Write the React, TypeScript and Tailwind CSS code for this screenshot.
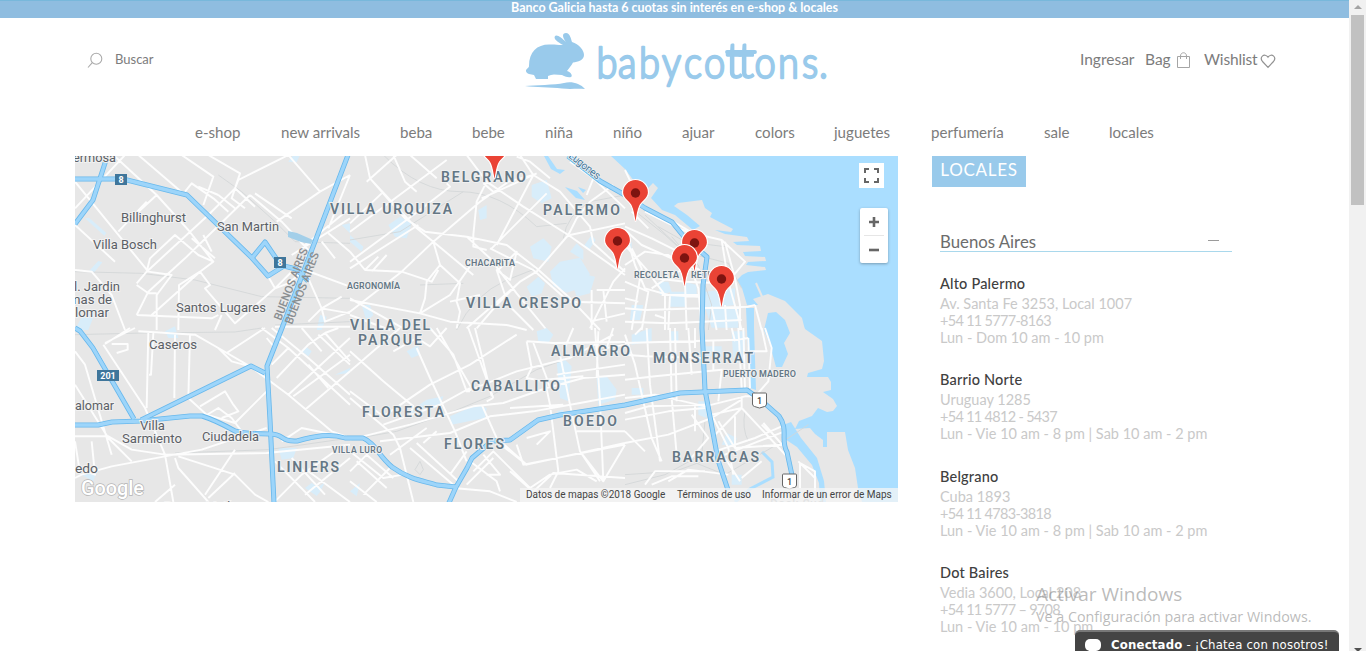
import React from "react";

const NAV: [string, string][] = [
  ["e-shop", "w-[46px]"],
  ["new arrivals", "w-[79px]"],
  ["beba", "w-[32px]"],
  ["bebe", "w-[33px]"],
  ["niña", "w-[28px]"],
  ["niño", "w-[29px]"],
  ["ajuar", "w-[33px]"],
  ["colors", "w-[39px]"],
  ["juguetes", "w-[57px]"],
  ["perfumería", "w-[73px]"],
  ["sale", "w-[25px]"],
  ["locales", "w-[45px]"],
];

const STORES = [
  { name: "Alto Palermo", address: "Av. Santa Fe 3253, Local 1007", phone: "+54 11 5777-8163", hours: "Lun - Dom 10 am - 10 pm" },
  { name: "Barrio Norte", address: "Uruguay 1285", phone: "+54 11 4812 - 5437", hours: "Lun - Vie 10 am - 8 pm | Sab 10 am - 2 pm" },
  { name: "Belgrano", address: "Cuba 1893", phone: "+54 11 4783-3818", hours: "Lun - Vie 10 am - 8 pm | Sab 10 am - 2 pm" },
  { name: "Dot Baires", address: "Vedia 3600, Local 208", phone: "+54 11 5777 – 9708", hours: "Lun - Vie 10 am - 10 pm" },
];

/* Each tile holds its streets in a local grid three times finer than the map. */
const TILES = [
  {
    x: 75, y: 155,
    parks: "M30 190l12 -2l52 46l-6 8zM40 350l30-32l12 4l-24 30zM0 525l20-40l40-10l-20 50zM800 210l25 -5v30zM640 20l15-20h20l-10 22zM735 480l20 5l-15 40h-15z",
    rail: "M0 350L200 355L360 375L560 425L825 430M430 60L500 110L600 200L660 260L825 265M600 510L825 500",
    streets: "M115 0L245 120L340 225L415 320M190 0L330 120M320 0L415 65L385 150M400 0L495 55L480 100L540 155M500 0L640 0L490 75L480 100L400 180L215 350L185 385M640 0L735 110L605 200M735 110L825 60M525 120L620 200L700 285M540 115L650 190M525 120L330 310L220 410L185 480M150 0L0 160M330 110L350 85L415 130L460 170M370 95L430 120M430 120L480 160M480 100L470 130L510 160M0 80L220 350L290 360L245 420V525M215 350L225 310L300 240L370 300L415 320L375 350L230 480M310 525L312 390L375 350L405 390L390 400L480 505L600 400L700 300M185 390L220 415H245M0 210L120 320M350 250L420 310M385 240L410 290M0 345L50 350L110 420L150 525M185 480L410 490L430 480M580 365L600 400L640 385L690 345L825 395M700 370L740 460L825 475M740 460L700 500M690 270L825 160M825 60L760 220M740 260L780 310M760 235L825 290M650 300L825 190M420 525L440 480M600 515L825 515M800 425L740 460L750 500L825 470M130 230L215 140M245 120L180 180",
  },
  {
    x: 350, y: 155,
    parks: "M115 210l35-25l35 20l-15 45l-35-5zM385 165l25-15v40l-20 5zM540 275l40-25l25 25l-10 45l-45-10zM600 350l30-30l60-12l30 50l-25 40l-45 15l-40-20zM660 290l20-25l20 20v30zM690 355l45 10l-15 50l-40 10l-10-30zM530 395l35-30l20 20l-10 30l-30 10zM545 90l45-15l15 55l-30 15l-30-20zM0 240l40 35l-5 15l-35-30zM700 275l25-35l12 15l-20 30zM35 450l25 0l10 30l-20 20z",
    rail: "M100 0Q210 110 330 110T560 215L650 205M320 525Q370 420 470 375L560 340M0 255L150 230L340 110M210 390L340 385M640 250Q650 180 720 140L825 120",
    streets: "M45 0L60 70L195 215L250 260L370 360M50 80L140 0M0 230L290 15M0 320L190 180L300 95L290 85M0 340L205 210M0 205L95 115M130 0L165 80L200 110M180 0L260 70M60 70L165 190L225 230L350 245L470 270L560 340L660 430L750 525M350 0L410 80L380 140L370 240V275L410 285M250 260L390 140L475 80L550 60L630 110L720 215L730 265M410 80L520 155L655 240L825 360M395 130L560 55M400 85L430 110M510 0L550 60L440 270M500 5L540 20L600 70M590 115L425 280M655 240L560 350L510 380L440 450L380 520M655 240L680 190L720 140L790 90M250 260L270 330L230 380L225 430L210 475L0 435M270 330L330 385L320 440L330 470L320 520M250 260L155 350L0 470M155 350L245 380L265 345M65 350L110 300M45 345L85 305M370 320L300 420L210 475M350 245L420 310L500 415L590 525M420 280L550 345L640 425L660 440L825 445M440 350L500 290L480 375L440 345L475 450L550 525M500 290L450 340M510 380L430 450L350 520M660 240L825 205M0 430L160 520M0 480L120 525M210 475L300 500L470 510L530 525M300 440L390 420M740 405H825M725 405V525M760 405L770 500M720 500L825 475M720 520L790 380L825 340M0 290L45 345L155 350M730 265L825 350M730 70L825 160M660 20L730 70L710 120",
  },
  {
    x: 625, y: 155,
    parks: "M100 380h30l10 30l-35 10zM135 410h45v45h-45zM240 410l90-10v50l-90 10zM180 380l35 10v30h-35zM20 450h35l-10 45h-30zM0 280l20-20v30zM240 458h100v60h-80z",
    rail: "M20 160L120 240L175 290L310 325L350 400M100 215L180 260L300 275M60 180L220 330L260 450L250 525M140 245L215 330",
    streets: "M0 45L50 150L110 180L205 235L290 255L360 320L310 380M0 215L80 250L160 290M60 170L150 215L210 240M0 225L50 270L140 310L225 345M0 330L60 290L130 300L220 360M0 270L70 350L90 380L120 420M0 230L30 330L60 400L130 420L220 425M20 280L50 340L35 430L20 525M90 370L180 380L290 385M120 420V525M135 420L130 525M80 400L140 360L180 340M180 385L185 525M290 255L310 380L350 525M300 260L330 370L345 450V525M0 460L60 465L370 455L390 450M0 500L130 505L350 495M0 380L70 410L50 525M200 345L220 400L230 525M260 455L275 525M300 450L305 525M390 450L410 525M20 170L70 220M110 420H220M90 480L120 490M0 430L40 440",
  },
  {
    x: 75, y: 328,
    parks: "M680 70l12-15l18 15l-10 15zM610 360h55l-10 30l-35 5zM270 10l30-15l10 35h-30zM690 480l20-15l20 12l20-15l-15 30l-10 12zM20 440l45-10l-10 30zM780 140l45-20v15z",
    rail: "M0 20L210 15L480 12L560 0M300 375L580 365L825 330",
    streets: "M0 0L60 60L150 220M90 45L180 0M85 50L210 240L270 380L295 522M0 70L30 110L110 380M0 170L100 330L170 400M0 325L100 325L170 365L270 380L575 375L825 350M0 450L20 440L110 415L270 385L380 365L575 300M110 48H158V65L125 75M220 10L215 240M235 15L228 140H222M300 20L298 210M345 20L340 210M190 10L360 20L430 60L525 115L640 200L770 310L825 330M430 60L470 100L525 115M455 75L570 0M340 210L395 260L480 285L575 190M375 235L450 190L475 230L490 250L440 270M380 270L430 240L470 270L500 310M605 150L700 50L750 15L825 100M640 200L825 30M655 205L825 80M690 245L825 130M560 0L640 60L825 230M590 0L700 90L825 200M730 20L825 110M750 15L790 0M700 110L760 180M640 60L590 110M740 70L680 0M0 340L15 435M50 340L60 440L30 430M300 390L310 420L400 522M310 385L480 440L540 500L580 522M400 510L480 435M480 365L390 500M240 522L300 470M600 400L720 522M825 390L690 500M700 430L825 522M600 520L680 440L780 370M650 390L750 500M620 340L680 300L825 330M165 0L90 48M575 30L600 60",
  },
  {
    x: 350, y: 328,
    parks: "M180 250l50-35l50-10l-10 30l-80 25zM300 265l80-35l30 10l-5 30l-100 20zM620 100l20-10l25 25l-10 105l-25-10zM740 150l30-5l30 40l-5 30l-50 15zM170 70l35-20l5 30l-25 10zM560 10l30-10l20 20l-15 25l-30-5zM620 250l20-5v20zM0 490l30-25l-10 40z",
    rail: "M0 335L140 310L310 250L420 205L560 125L660 90L825 45M210 400l10 25l-10 15l-15-15z",
    streets: "M0 130L150 0M0 70L100 160L190 235L180 260M0 190L100 265L240 170L360 110L500 20M0 210L130 320L150 360L190 522M130 70L200 30L240 55L290 0M200 60L240 150L280 235L315 310L350 400M240 0L310 80L350 190L360 190M260 0L370 190M355 0L430 210M375 0L425 205M350 190L500 130L660 90L790 20M100 290L270 230L360 180M0 335L180 290L370 235L460 225L590 180L700 150L825 140M90 340L300 315L420 265L550 250L690 225L825 200M395 230L440 330M410 220L430 210M440 330L530 410L600 395L825 345M0 430L60 370M0 370L100 450L160 440M20 400L110 480M50 380L130 450M120 380L230 300M180 360L310 470M200 345L325 460M220 345L260 310M300 440L350 370M120 420L40 500M310 480L420 490L500 522M360 400L440 460L450 490M370 430L430 370L540 480L600 440L680 425L740 460M350 470L430 390M400 380L450 440L410 440M440 340L530 410M500 350L520 410L825 350M530 40L545 120L530 150L585 160L600 230L625 430L600 480M530 40L610 45L825 42M550 45L590 150L600 180M585 155L700 145M630 80L660 230L690 370L750 460M735 0L750 220L760 460M745 10L740 150M670 0L640 70M620 140L825 110M680 310L825 310M690 370L760 460L825 350M530 330L600 310L560 350M825 450L610 435L540 500M480 240L640 230M480 430L560 500M790 0L770 60L825 50M0 460L80 522",
  },
  {
    x: 625, y: 328,
    parks: "M20 20l60-20v40l-60 10zM320 10h40v100l-35-10zM220 220h25v50l-25-10zM290 350l15-35l30 15l-5 25zM320 440l30 0v30h-30zM135 10h25v30h-25zM240 55h50v30h-50zM20 180h35v20h-35z",
    rail: "M240 280L230 380L120 440L0 470M360 250Q350 300 370 340M200 400L300 440L490 330L550 290M0 440L150 430L260 390",
    streets: "M0 45L340 35L370 30M0 20L30 110L80 330L110 400M65 0L75 170L105 400M135 0L140 210L155 380M150 0L155 220M190 0L200 140M340 0L350 180M355 0L360 180M370 30L375 180M0 155L90 145L290 125L360 130M0 210L90 200L240 235L360 205L400 205M0 255L70 235L240 230M0 275L130 250L240 240M0 345L130 320L260 270L350 215M350 205V240L490 390M260 260L350 240M255 250L310 360L325 440M280 280L330 360L470 350M270 370L390 330L470 295M275 390L400 340L480 310M330 265V360M350 240L260 330M415 285L480 360M410 290L430 310M60 470L90 430L240 430M80 470L140 445H220M210 235V310M130 460L190 425L310 440M290 125L280 220M210 60V0M265 40V130M375 70H425L410 0M420 0L440 60L430 160L395 200M0 80L60 85L250 90M300 390L345 460M350 450L410 400M520 400L570 450M570 490V430L525 405V480M0 310L60 370M30 20L50 0M320 0L330 40M200 260L250 330L190 400",
  },
];

const MAJOR = [
  "M75 179L123 179L187 195L252 258L268 276L284 266L296 269L308 281",
  "M106 160L93 200L75 224",
  "M252 258L265 242L280 264",
  "M348 155L282 328L267 366L270 420L274 503",
  "M75 328L80 331L93 348L134 419",
  "M141 420L251 366L265 373",
  "M75 425L98 425L112 422L141 421L160 419L190 416L202 416Q215 420 235 431Q245 434 270 434C285 434 280 442 297 441C315 436 330 433 345 438L363 438C375 443 378 455 392 467C410 480 425 481 437 485L456 487L467 468L472 458L492 441L510 440L538 420L560 415L625 405L680 393L747 390L762 401L779 416C789 430 780 440 787 452L793 480",
  "M456 487L448 505",
  "M568 156L600 181L625 195L645 208L672 222L685 238L707 257L703 285L702 328L705 390L711 422L718 460L728 490",
];

const PINS: [number, number][] = [
  [494.5, 179], [635.5, 221.5], [617.5, 269.5], [694.5, 271.5], [684.5, 286.5], [721.5, 307.5],
];

function Place({ x, y, children, size = 13, w }: { x: number; y: number; children: React.ReactNode; size?: number; w: number }) {
  return <text x={x} y={y} fontSize={size} textLength={w} lengthAdjust="spacingAndGlyphs" fill="#5b6066" stroke="#f2f2f2" strokeWidth="2" paintOrder="stroke">{children}</text>;
}

function District({ x, y, children, w, size = 14 }: { x: number; y: number; children: React.ReactNode; size?: number; w: number }) {
  return <text x={x} y={y} fontSize={size} fontWeight="600" textLength={w} fill="#647785" stroke="#f0f0f0" strokeWidth="2" paintOrder="stroke">{children}</text>;
}

function Pin({ x, y }: { x: number; y: number }) {
  return (
    <g transform={`translate(${x} ${y})`}>
      <path d="M0 0C-1.500 0 -1.200-11-5-17C-8-21.500-13-23-13-29A13 13 0 0 1 13-29C13-23 8-21.500 5-17C1.200-11 1.500 0 0 0Z" fill="#ea4335" stroke="#fff" strokeWidth="1.200" />
      <circle cy="-28.500" r="4.700" fill="#7d1410" />
    </g>
  );
}

function RouteShield({ x, y, w, label }: { x: number; y: number; w: number; label: string }) {
  return (
    <g>
      <rect x={x} y={y} width={w} height="11" fill="#3f769b" />
      <text x={x + w / 2} y={y + 9} fontSize="9" fontWeight="700" fill="#fff" textAnchor="middle">{label}</text>
    </g>
  );
}

function NationalShield({ x, y }: { x: number; y: number }) {
  return (
    <g>
      <path d={`M${x - 6} ${y - 7}h12q1 0 1 1v10q0 2-2 2.500l-5 1.500l-5-1.500q-2-.5-2-2.500v-10q0-1 1-1z`} fill="#fff" stroke="#666" />
      <text x={x} y={y + 4} fontSize="9" fill="#444" textAnchor="middle" fontWeight="500">1</text>
    </g>
  );
}

function MapDrawing() {
  return (
    <svg viewBox="75 156 823 346" className="block h-[346px] w-[823px] font-['Roboto',sans-serif]" role="img">
      <rect x="75" y="156" width="823" height="346" fill="#aadeff" />
      <path fill="#e7e7e7" d="M75 156H611L625 169L634 181L647 189L653 183L658 188L651 198L662 210L675 215L693 230L700 226L687 215L674 206L678 203L702 200L705 208L712 213L710 217L733 229L731 232L715 230L725 234L747 237L749 241L733 242L737 245L760 246L761 251L743 252L745 256L765 257L766 261L748 262L746 265L765 267L766 270L748 272L742 275L737 280L742 288L747 305H758L753 299L768 294L785 301L802 318L804 326L805 329L822 341L824 361L822 369L808 373L807 377L828 377L831 382V390L823 392L833 399L837 406L833 411L827 412L818 408L812 416L799 421L795 429L810 428L815 434L823 440V447H827V432H845L848 450L855 468L858 488L862 502H75Z" />
      <g fill="#aadeff">
        <path d="M768 313L776 312L785 320L790 333L784 343L788 354L782 367L776 367L770 345L764 330Z" />
        <path d="M746 308h8v20l2 62l-6-2l-3-58z" />
        <path d="M783 425L791 422L801 438L817 458L824 481L826 502H820L819 483L812 465L797 447L785 439Z" />
        <path d="M548 156L557 169L565 170L560 174L551 169L544 156Z" />
        <path d="M565 187l12 4l8 9l-9-2zM578 187l8 3l-3 3z" />
      </g>
      <path d="M756 283L764 301" stroke="#e7e7e7" strokeWidth="2" />
      <path d="M762 452L772 462L773 477L750 489L735 502" fill="none" stroke="#aadeff" strokeWidth="3" />
      {TILES.map((t) => (
        <g key={`${t.x}-${t.y}`} transform={`translate(${t.x} ${t.y}) scale(.33333)`} fill="none" strokeLinejoin="round">
          <path d={t.parks} fill="#d8edfa" />
          <path d={t.rail} stroke="#d3d6d7" strokeWidth="2.500" />
          <path d={t.streets} stroke="#fdfdfd" strokeWidth="5.800" />
        </g>
      ))}
      <path d="M288 231L297 233L313 240L311 244L301 242L288 237Z" fill="#a3cfe9" />
      <g fill="none" strokeLinejoin="round">
        {MAJOR.map((d) => <path key={d} d={d} stroke="#68b8ec" strokeWidth="5" />)}
        {MAJOR.map((d) => <path key={d} d={d} stroke="#9dd5fa" strokeWidth="3.400" />)}
      </g>
      <RouteShield x={115} y={174} w={12} label="8" />
      <RouteShield x={274} y={257} w={12} label="8" />
      <RouteShield x={97} y={370} w={22} label="201" />
      <NationalShield x={759.5} y={400} />
      <NationalShield x={789.5} y={481} />

      <Place x={73} y={162} w={43}>ermosa</Place>
      <Place x={121} y={222} w={65}>Billinghurst</Place>
      <Place x={93} y={249} w={64}>Villa Bosch</Place>
      <Place x={217} y={231} w={62}>San Martin</Place>
      <Place x={74} y={291} w={46}>l. Jardin</Place>
      <Place x={69} y={304} w={43}>mas de</Place>
      <Place x={75} y={317} w={34}>lomar</Place>
      <Place x={176} y={312} w={90}>Santos Lugares</Place>
      <Place x={149} y={349} w={48}>Caseros</Place>
      <Place x={75} y={410} w={39}>alomar</Place>
      <Place x={140} y={430} w={25}>Villa</Place>
      <Place x={122} y={442.5} w={60}>Sarmiento</Place>
      <Place x={202} y={441} w={57}>Ciudadela</Place>
      <Place x={75} y={473} w={23}>edo</Place>
      <Place x={164} y={511} w={72}>Ramos Mejía</Place>
      <text transform="translate(281 321) rotate(-69)" fontSize="11.500" textLength="76" lengthAdjust="spacingAndGlyphs" fill="#8a8e91" fontWeight="500">BUENOS AIRES</text>
      <text transform="translate(292 325) rotate(-69)" fontSize="11.500" textLength="76" lengthAdjust="spacingAndGlyphs" fill="#8a8e91" fontWeight="500">BUENOS AIRES</text>
      <text transform="translate(568 157) rotate(38)" fontSize="10.500" textLength="37" fill="#3f769b" stroke="#f0f0f0" strokeWidth="1.500" paintOrder="stroke">Lugones</text>
      <text x="770" y="508" fontSize="12" textLength="54" fill="#a9adb0" fontWeight="500">Dock Sud</text>

      <District x={441} y={182} w={85}>BELGRANO</District>
      <District x={330} y={214} w={122}>VILLA URQUIZA</District>
      <District x={543} y={215} w={77}>PALERMO</District>
      <District x={466} y={308} w={115}>VILLA CRESPO</District>
      <District x={350} y={330} w={80}>VILLA DEL</District>
      <District x={358} y={345} w={64}>PARQUE</District>
      <District x={551} y={356} w={79}>ALMAGRO</District>
      <District x={653} y={363} w={100}>MONSERRAT</District>
      <District x={471} y={391} w={89}>CABALLITO</District>
      <District x={362} y={417} w={82}>FLORESTA</District>
      <District x={563} y={426} w={54}>BOEDO</District>
      <District x={444} y={449} w={60}>FLORES</District>
      <District x={277} y={472} w={62}>LINIERS</District>
      <District x={672} y={462} w={87}>BARRACAS</District>
      <District x={465} y={265.5} w={50} size={9}>CHACARITA</District>
      <District x={347} y={288.5} w={53} size={9}>AGRONOMÍA</District>
      <District x={634} y={278} w={45} size={9}>RECOLETA</District>
      <District x={691} y={278} w={31} size={9}>RETIRO</District>
      <District x={723} y={377} w={73} size={9}>PUERTO MADERO</District>
      <District x={332} y={453} w={50} size={8.5}>VILLA LURO</District>

      {PINS.map(([x, y]) => <Pin key={`${x}-${y}`} x={x} y={y} />)}
      <text x="81" y="494.500" fontSize="20" textLength="63" lengthAdjust="spacingAndGlyphs" fill="#fff" stroke="#b5b5b5" strokeWidth="1.400" paintOrder="stroke" fontWeight="500">Google</text>
    </svg>
  );
}

function StoreMap() {
  return (
    <section className="relative h-[346px] w-[823px] overflow-hidden">
      <MapDrawing />
      <button className="absolute top-[7px] right-[14px] flex size-[25px] items-center justify-center bg-white">
        <svg viewBox="0 0 15 15" className="size-[15px]" fill="none" stroke="#666" strokeWidth="2">
          <path d="M1 5V1H5M10 1H14V5M14 10V14H10M5 14H1V10" />
        </svg>
      </button>
      <div className="absolute top-[52px] right-[10px] flex h-[55px] w-[28px] flex-col items-center rounded-[2px] bg-white shadow-[0_1px_3px_rgba(0,0,0,0.3)]">
        <button className="flex h-[27px] items-center">
          <svg viewBox="0 0 10 10" className="size-[10px]"><path d="M5 0V10M0 5H10" stroke="#666" strokeWidth="2.600" /></svg>
        </button>
        <div className="h-px w-[20px] bg-[#e6e6e6]" />
        <button className="flex h-[27px] items-center">
          <svg viewBox="0 0 10 10" className="size-[10px]"><path d="M0 5H10" stroke="#666" strokeWidth="2.600" /></svg>
        </button>
      </div>
      <div className="absolute right-0 bottom-0 flex h-[14px] w-[378px] items-center gap-[12px] bg-[#f5f5f5]/75 pr-[7px] pb-px pl-[6px] font-['Roboto',sans-serif] text-[10px] whitespace-nowrap text-[#444]">
        <span className="w-[139px]">Datos de mapas ©2018 Google</span>
        <span className="w-[73px]">Términos de uso</span>
        <span className="w-[130px]">Informar de un error de Maps</span>
      </div>
    </section>
  );
}

function Logo() {
  return (
    <svg viewBox="520 30 312 64" className="h-[64px] w-[312px]" fill="#99caeb">
      <path d="M529 74C526 73 525 70 527 69C528 67 529 68 529 66C529 52 537 44.500 549 44.500C555 44 559 45.500 563 45C558 42 553 39 555 36C557 34 562 38 566 42C562 37 562 33 566 33C570 33 571 39 572 42C579 44 584 50 584 55C584 60 578 62 573 62.500C571 66 569 68 567 71C571 72 573 76 571 77C568 78 564 76 562 75L554 74.500C552 75 550 75 548 76L548 79L536 79L534 75Z" />
      <path d="M525 86C535 85 555 85 564 83C571 81 580 83 585 89C575 88.500 570 89.500 562 88.500C550 87 535 87.500 525 86Z" />
      <g className="font-['Lato',sans-serif]" stroke="#99caeb" strokeWidth="2.100" strokeLinejoin="round" fontWeight="300">
        <text y="69.500" transform="scale(1 1.120)" fontSize="38" x="596.500 618 639 662 684 704">babyco</text>
        <text y="77.500" x="725.500 737.500" fontSize="49">tt</text>
        <text y="69.500" transform="scale(1 1.120)" fontSize="38" x="754.500 778 802 819">ons.</text>
      </g>
      <path d="M727 52H755" stroke="#99caeb" strokeWidth="3.800" strokeLinecap="round" />
    </svg>
  );
}

function Header() {
  return (
    <header className="font-['Lato',sans-serif] text-[#7c7c7c]">
      <div className="flex h-[18px] justify-center border-t border-[#78b8db] bg-[#8fbde0] text-[12.500px] leading-[13px] font-bold tracking-[-0.030px] text-white">
        <span className="whitespace-nowrap">Banco Galicia hasta 6 cuotas sin interés en e-shop &amp; locales</span>
      </div>
      <div className="flex h-[96px] items-start pt-[12px] pr-[73px] pl-[87px]">
        <div className="flex w-[433px] items-center gap-[12px] pt-[20px]">
          <svg viewBox="0 0 16 16" className="mt-[2px] size-[16px]" fill="none" stroke="#aaa" strokeWidth="1.100">
            <circle cx="9.300" cy="6.800" r="5.500" /><path d="M5.300 10.700L1 15.500" />
          </svg>
          <span className="text-[13px] leading-[18px]">Buscar</span>
        </div>
        <Logo />
        <div className="flex flex-1 items-center justify-end pt-[18px] text-[15.500px] leading-[20px]">
          <span className="w-[65px] whitespace-nowrap">Ingresar</span>
          <span className="w-[31px] pt-[1px]">Bag</span>
          <svg viewBox="0 0 15 17" className="mt-[4px] h-[17px] w-[15px]" fill="none" stroke="#a5a5a5">
            <path d="M1.500 4.500H13.500V15.500H1.500ZM4.500 7V4C4.500-.3 10.500-.3 10.500 4V7" />
          </svg>
          <span className="ml-[13px] w-[56px] pt-[1px] tracking-[-0.150px] whitespace-nowrap">Wishlist</span>
          <svg viewBox="0 0 16 16" className="mt-[5px] size-[16px]" fill="none" stroke="#929292" strokeWidth="1.200">
            <path d="M8 14.300L2.500 8.500C-1 4 4.500-.5 8 4.200C11.500-.5 17 4 13.500 8.500Z" />
          </svg>
        </div>
      </div>
      <nav className="flex h-[42px] gap-[40px] pt-[8px] pl-[195px] text-[15.100px] leading-[21px] whitespace-nowrap">
        {NAV.map(([label, width]) => <a key={label} className={width}>{label}</a>)}
      </nav>
    </header>
  );
}

function StoreList() {
  return (
    <aside className="ml-[34px] w-[300px] font-['Lato',sans-serif]">
      <h1 className="flex h-[31px] w-[94px] justify-center bg-[#99caeb] text-[17px] leading-[27px] tracking-[0.700px] text-white">LOCALES</h1>
      <div className="ml-[8px]">
        <div className="mt-[44px] flex h-[21px] items-center justify-between border-b border-[#a9d8ec] pr-[13px] text-[16.800px] leading-[20px] text-[#6c6c6c]">
          <h2 className="pt-[2px] whitespace-nowrap">Buenos Aires</h2>
          <span className="mb-[2px] h-px w-[11px] bg-[#9b9b9b]" />
        </div>
        <ul className="pt-[22px]">
          {STORES.map((s) => (
            <li key={s.name} className="h-[96.400px] text-[14.500px] leading-[17px] whitespace-nowrap text-[#c9c9c9]">
              <h3 className="mb-[1px] leading-[20px] font-medium tracking-[0.200px] text-[#404040]">{s.name}</h3>
              <p>{s.address}</p>
              <p className="tracking-[-0.700px]">{s.phone}</p>
              <p>{s.hours}</p>
            </li>
          ))}
        </ul>
      </div>
    </aside>
  );
}

export default function App() {
  return (
    <div className="relative flex h-[651px] w-[1366px] overflow-hidden bg-white">
      <div className="h-[651px] w-[1349px] overflow-hidden">
        <Header />
        <main className="flex pl-[75px]">
          <StoreMap />
          <StoreList />
        </main>
      </div>
      <div className="flex w-[17px] flex-col items-center justify-between bg-[#f1f1f1]">
        <div className="flex flex-col items-center">
          <div className="flex h-[15px] items-center"><svg viewBox="0 0 8 4" className="mt-[-1px] h-[4px] w-[8px]"><path d="M0 4L4 0L8 4Z" fill="#a3a3a3" /></svg></div>
          <div className="h-[190px] w-[13px] bg-[#c1c1c1]" />
        </div>
        <svg viewBox="0 0 8 4" className="h-[4px] w-[8px]"><path d="M0 1H8L5 4H3Z" fill="#505050" /></svg>
      </div>
      <div className="absolute top-[581px] left-[1036px] font-['Open_Sans',sans-serif] whitespace-nowrap text-[#8d8d8d]/60">
        <p className="text-[19px] leading-[26px]">Activar Windows</p>
        <p className="text-[14.300px] leading-[20px]">Ve a Configuración para activar Windows.</p>
      </div>
      <div className="absolute top-[630px] left-[1075px] flex h-[27px] w-[264px] items-center rounded-t-[5px] border-t-2 border-[#777] bg-[#444] pl-[10px] font-['DejaVu_Sans_Condensed','DejaVu_Sans',sans-serif] text-[13px] whitespace-nowrap text-white">
        <svg viewBox="0 0 17 14" className="mr-[9px] h-[14px] w-[17px]"><rect y="1" width="16" height="12" rx="5" fill="#fff" /><path d="M4 11V14L9 12Z" fill="#fff" /></svg>
        <span className="tracking-[0.200px]"><b>Conectado</b> - ¡Chatea con nosotros!</span>
      </div>
    </div>
  );
}
